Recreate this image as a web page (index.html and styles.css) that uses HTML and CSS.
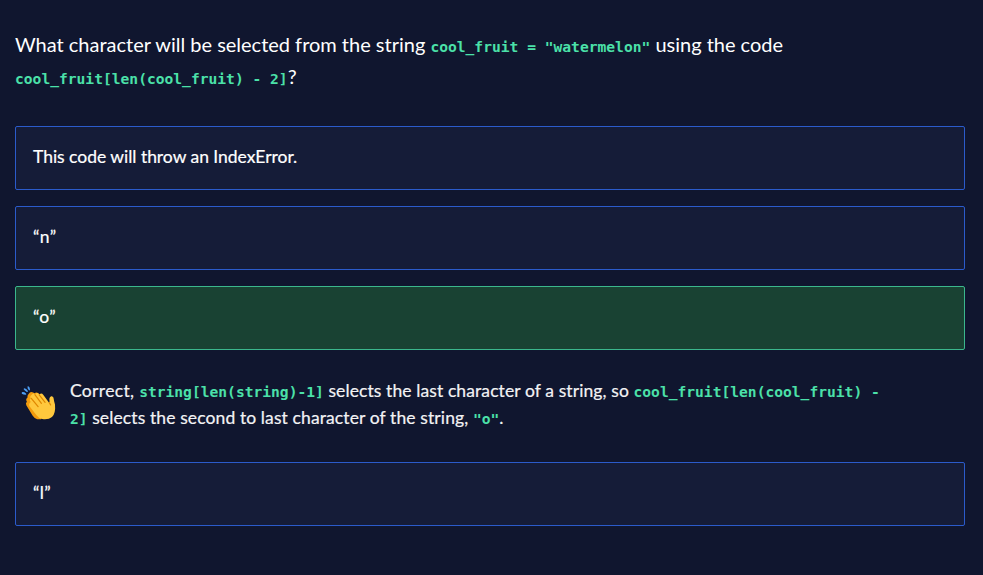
FILE: index.html
```html
<!DOCTYPE html>
<html lang="en">
<head>
<meta charset="utf-8">
<title>Python Quiz</title>
<link rel="stylesheet" href="styles.css">
</head>
<body>
<main class="quiz">
  <h1 class="question">What character will be selected from the string <code>cool_fruit = "watermelon"</code> using the code<br><code>cool_fruit[len(cool_fruit) - 2]</code>?</h1>
  <div class="option">This code will throw an IndexError.</div>
  <div class="option answer">“n”</div>
  <div class="option answer correct">“o”</div>
  <div class="feedback">
    <svg class="clap" viewBox="0 0 36 36" aria-hidden="true">
      <g fill="#4d9ff5"><path d="M.8 7.200q1.800-.8 4.200 1.200q.6 1.100-.3 1.300Q2.300 9.500.8 8.700z"/><path d="M3 3.300q2.400-.1 3.900 2.700q.1 1.300-1 1Q3.800 5.700 2.700 4.300z"/><path d="M7.300 1.200q1.700.8 1.700 3.500q-.4 1.200-1.300.4Q6.300 3.500 6.500 1.500z"/></g>
      <path fill="#f39b0d" d="M7.400 9.300q2-3.600 4.800-1.800l1.300.8q1.800-1.800 4.100.1L29 20l-9 14.300h-3.800q-2.500-.5-4.500-3.500L5.300 20.300q-1-2.200.6-3.500-1.700-2.500.6-4.200-.4-2.100.9-3.300z"/>
      <path fill="#ffc83d" d="M9.700 17.100q-1.800-2.200 0-3.600-1.200-2.400.8-3.500 1.500-2.600 3.600-.8 1.900-2.500 4 0l.3.500q1.900-2.300 3.800.1l5.700 7.600q.8.500.6-1.300-.7-4 1.700-4.900 2.400-.4 2.500 2.500.2 2.600 1.300 5.700.8 8.900-3 12.600-3.500 3-9.700 2.100-3.400-.5-6-4.200L8.500 21.300q-1.200-2.500 1.200-4.200z"/>
      <path d="m10.300 13.300 6.800 8.300M13.900 9.700l6.500 8.600M18.200 9.900l5.900 7.500M28.300 17.800l1.300 2.100" fill="none" stroke="#df8700" stroke-width="1.200" stroke-linecap="round"/>
    </svg>
    <p class="explanation"><span class="intro">Correct, </span><code>string[len(string)-1]</code> selects the last character of a string, so <code>cool_fruit[len(cool_fruit) -<br>2]</code><span class="detail"> selects the second to last character of the string, </span><code>"o"</code>.</p>
  </div>
  <div class="option answer">“l”</div>
</main>
</body>
</html>
```
FILE: styles.css
```css
* { box-sizing: border-box; }
body {
  margin: 0;
  background: #10162f;
  color: #fff;
  font-family: Lato, sans-serif;
}
.quiz { padding: 28px 18px 0 15px; }
.question {
  margin: 0 0 34px;
  font-size: 20px;
  font-weight: 400;
  line-height: 32px;
  letter-spacing: -.008px;
  white-space: nowrap;
}
code {
  color: #4be1a9;
  font: bold 14.617px "DejaVu Sans Mono", monospace;
  letter-spacing: 0;
  -webkit-text-stroke: 0;
}
.option {
  height: 64px;
  margin-bottom: 16px;
  padding: 16px 17px;
  border: 1px solid #2b5bcb;
  border-radius: 2px;
  background: #151c38;
  font-size: 17.5px;
  line-height: 28px;
  letter-spacing: -.02px;
  -webkit-text-stroke: .2px;
}
.answer { letter-spacing: .4px; }
.option.correct {
  margin-bottom: 27px;
  border-color: #3bb78d;
  background: #194233;
}
.feedback {
  display: flex;
  height: 85px;
}
.clap {
  width: 36px;
  height: 36px;
  margin: 8px 13px 0 6px;
  flex: none;
}
.explanation {
  margin: 0;
  color: #f3f3f5;
  font-size: 17.5px;
  line-height: 27px;
  letter-spacing: .1px;
  white-space: nowrap;
  -webkit-text-stroke: .2px;
}
.intro { letter-spacing: .33px; }
.detail { letter-spacing: .11px; }
```
